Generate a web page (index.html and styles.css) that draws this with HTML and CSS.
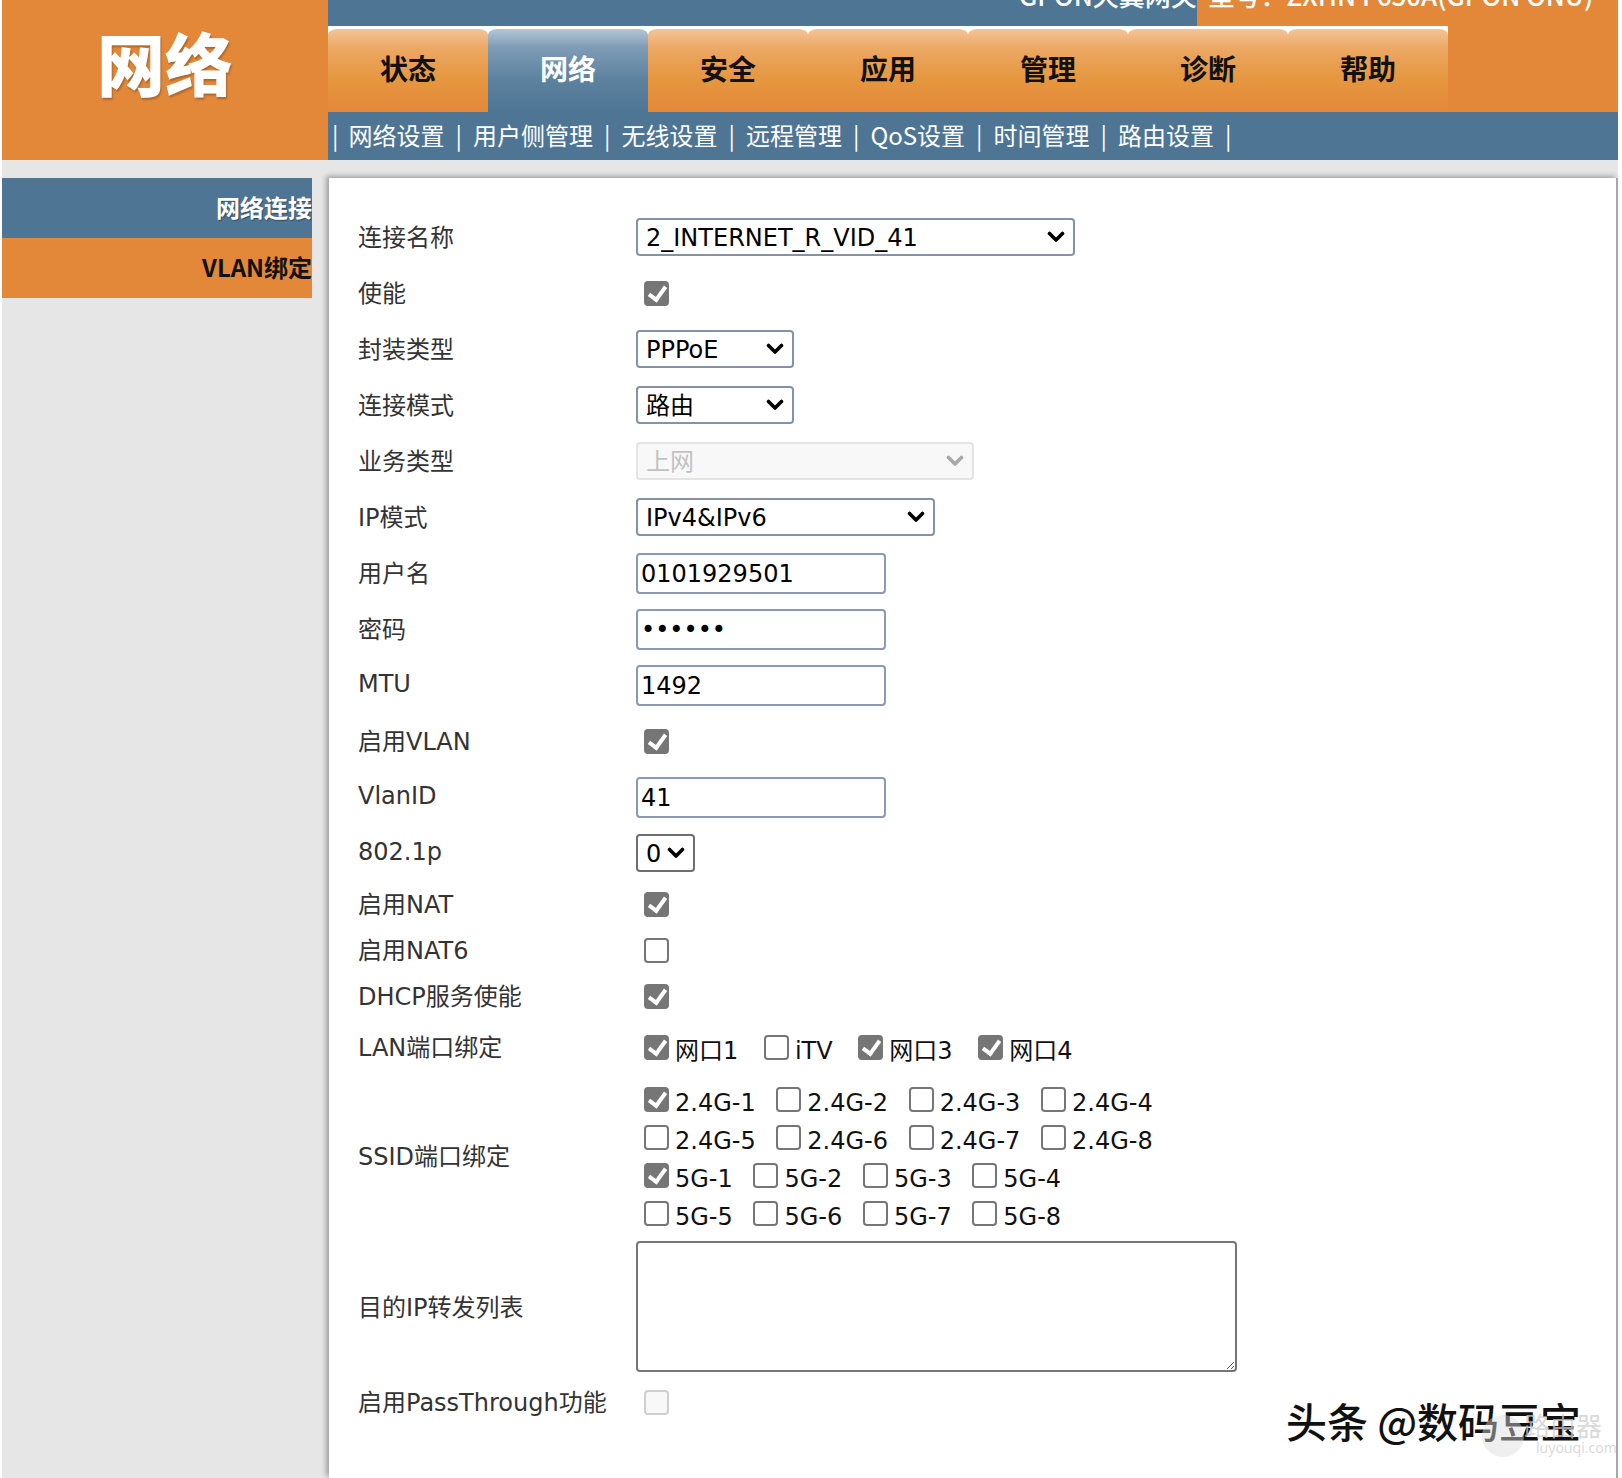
FILE: index.html
```html
<!DOCTYPE html>
<html lang="zh-CN">
<head>
<meta charset="utf-8">
<title>网络</title>
<link rel="stylesheet" href="styles.css">
</head>
<body>
<div class="page">
  <header class="top">
    <div class="logo">网络</div>
    <div class="hright">
      <div class="topbar">
        <div class="tb-blue"></div>
        <div class="tb-orange"></div>
        <div class="model">GPON天翼网关&nbsp;&nbsp;型号：ZXHN F650A(GPON ONU)</div>
      </div>
      <div class="tabrow">
        <nav class="tabs">
          <a class="tab">状态</a>
          <a class="tab active">网络</a>
          <a class="tab">安全</a>
          <a class="tab">应用</a>
          <a class="tab">管理</a>
          <a class="tab">诊断</a>
          <a class="tab">帮助</a>
        </nav>
        <div class="tabfill"></div>
      </div>
      <div class="subnav"><span class="sep first">|</span>网络设置<span class="sep">|</span>用户侧管理<span class="sep">|</span>无线设置<span class="sep">|</span>远程管理<span class="sep">|</span>QoS设置<span class="sep">|</span>时间管理<span class="sep">|</span>路由设置<span class="sep last">|</span></div>
    </div>
  </header>

  <div class="body">
    <aside class="side">
      <div class="side-item side-active">网络连接</div>
      <div class="side-item side-orange">VLAN绑定</div>
    </aside>

    <main class="panel">
      <div class="row">
        <span class="lbl">连接名称</span>
        <span class="sel w-conn"><select><option>2_INTERNET_R_VID_41</option></select><svg class="chev" viewBox="0 0 18 12" width="18" height="12"><path d="M2.5 2.5 L9 9 L15.5 2.5" fill="none" stroke="currentColor" stroke-width="3.6" stroke-linecap="round" stroke-linejoin="round"/></svg></span>
      </div>
      <div class="row">
        <span class="lbl">使能</span>
        <input class="cb" type="checkbox" checked>
      </div>
      <div class="row">
        <span class="lbl">封装类型</span>
        <span class="sel w-s"><select><option>PPPoE</option></select><svg class="chev" viewBox="0 0 18 12" width="18" height="12"><path d="M2.5 2.5 L9 9 L15.5 2.5" fill="none" stroke="currentColor" stroke-width="3.6" stroke-linecap="round" stroke-linejoin="round"/></svg></span>
      </div>
      <div class="row">
        <span class="lbl">连接模式</span>
        <span class="sel w-s"><select><option>路由</option></select><svg class="chev" viewBox="0 0 18 12" width="18" height="12"><path d="M2.5 2.5 L9 9 L15.5 2.5" fill="none" stroke="currentColor" stroke-width="3.6" stroke-linecap="round" stroke-linejoin="round"/></svg></span>
      </div>
      <div class="row">
        <span class="lbl">业务类型</span>
        <span class="sel w-m dis"><select disabled><option>上网</option></select><svg class="chev" viewBox="0 0 18 12" width="18" height="12"><path d="M2.5 2.5 L9 9 L15.5 2.5" fill="none" stroke="currentColor" stroke-width="3.6" stroke-linecap="round" stroke-linejoin="round"/></svg></span>
      </div>
      <div class="row">
        <span class="lbl">IP模式</span>
        <span class="sel w-ip"><select><option>IPv4&amp;IPv6</option></select><svg class="chev" viewBox="0 0 18 12" width="18" height="12"><path d="M2.5 2.5 L9 9 L15.5 2.5" fill="none" stroke="currentColor" stroke-width="3.6" stroke-linecap="round" stroke-linejoin="round"/></svg></span>
      </div>
      <div class="row">
        <span class="lbl">用户名</span>
        <input class="txt" type="text" value="0101929501">
      </div>
      <div class="row">
        <span class="lbl">密码</span>
        <input class="txt" type="password" value="123456">
      </div>
      <div class="row">
        <span class="lbl">MTU</span>
        <input class="txt" type="text" value="1492">
      </div>
      <div class="row">
        <span class="lbl">启用VLAN</span>
        <input class="cb" type="checkbox" checked>
      </div>
      <div class="row">
        <span class="lbl">VlanID</span>
        <input class="txt" type="text" value="41">
      </div>
      <div class="row">
        <span class="lbl">802.1p</span>
        <span class="sel w-p"><select><option>0</option></select><svg class="chev" viewBox="0 0 18 12" width="18" height="12"><path d="M2.5 2.5 L9 9 L15.5 2.5" fill="none" stroke="currentColor" stroke-width="3.6" stroke-linecap="round" stroke-linejoin="round"/></svg></span>
      </div>
      <div class="row cbr">
        <span class="lbl">启用NAT</span>
        <input class="cb" type="checkbox" checked>
      </div>
      <div class="row cbr">
        <span class="lbl">启用NAT6</span>
        <input class="cb" type="checkbox">
      </div>
      <div class="row cbr">
        <span class="lbl">DHCP服务使能</span>
        <input class="cb" type="checkbox" checked>
      </div>
      <div class="row lan">
        <span class="lbl">LAN端口绑定</span>
        <div class="opts">
          <label class="opt"><input class="cb" type="checkbox" checked>网口1</label>
          <label class="opt"><input class="cb" type="checkbox">iTV</label>
          <label class="opt"><input class="cb" type="checkbox" checked>网口3</label>
          <label class="opt"><input class="cb" type="checkbox" checked>网口4</label>
        </div>
      </div>
      <div class="row ssid">
        <span class="lbl">SSID端口绑定</span>
        <div class="opts">
          <div class="line">
            <label class="opt"><input class="cb" type="checkbox" checked>2.4G-1</label>
            <label class="opt"><input class="cb" type="checkbox">2.4G-2</label>
            <label class="opt"><input class="cb" type="checkbox">2.4G-3</label>
            <label class="opt"><input class="cb" type="checkbox">2.4G-4</label>
          </div>
          <div class="line">
            <label class="opt"><input class="cb" type="checkbox">2.4G-5</label>
            <label class="opt"><input class="cb" type="checkbox">2.4G-6</label>
            <label class="opt"><input class="cb" type="checkbox">2.4G-7</label>
            <label class="opt"><input class="cb" type="checkbox">2.4G-8</label>
          </div>
          <div class="line">
            <label class="opt"><input class="cb" type="checkbox" checked>5G-1</label>
            <label class="opt"><input class="cb" type="checkbox">5G-2</label>
            <label class="opt"><input class="cb" type="checkbox">5G-3</label>
            <label class="opt"><input class="cb" type="checkbox">5G-4</label>
          </div>
          <div class="line">
            <label class="opt"><input class="cb" type="checkbox">5G-5</label>
            <label class="opt"><input class="cb" type="checkbox">5G-6</label>
            <label class="opt"><input class="cb" type="checkbox">5G-7</label>
            <label class="opt"><input class="cb" type="checkbox">5G-8</label>
          </div>
        </div>
      </div>
      <div class="row area">
        <span class="lbl">目的IP转发列表</span>
        <textarea class="ta"></textarea>
      </div>
      <div class="row pass">
        <span class="lbl">启用PassThrough功能</span>
        <input class="cb" type="checkbox" disabled>
      </div>
    </main>
  </div>

  <div class="wm">头条 @数码豆宝</div>
  <div class="lyq">
    <span class="lyq-c"></span>
    <span class="lyq-t">路由器</span>
    <span class="lyq-u">luyouqi.com</span>
  </div>
</div>
</body>
</html>
```

FILE: styles.css
```css
html, body {
  margin: 0;
  padding: 0;
  background: #fff;
  overflow: hidden;
}

.page {
  position: relative;
  min-height: 1478px;
  padding: 0 4px 0 2px;
  display: flex;
  flex-direction: column;
  font-family: "DejaVu Sans", "Noto Sans CJK SC", sans-serif;
}

/* ---------- header ---------- */
.top {
  display: flex;
  height: 160px;
}

.logo {
  width: 326px;
  flex: none;
  background: #e38839;
  color: #fff;
  font-family: "Noto Sans CJK SC", sans-serif;
  font-weight: 900;
  font-size: 68px;
  line-height: 68px;
  text-align: center;
  padding-top: 28px;
  box-sizing: border-box;
  text-shadow: 1px 2px 2px rgba(0, 0, 0, 0.25);
}

.hright {
  flex: 1;
  display: flex;
  flex-direction: column;
}

.topbar {
  position: relative;
  height: 26px;
  display: flex;
  overflow: hidden;
}

.tb-blue {
  width: 869px;
  background: #4e7594;
}

.tb-orange {
  flex: 1;
  background: #e38839;
}

.model {
  position: absolute;
  left: 691px;
  top: -18px;
  color: #fff;
  font-family: "Noto Sans CJK SC", sans-serif;
  font-weight: 500;
  font-size: 26px;
  line-height: 26px;
  white-space: nowrap;
}

.tabrow {
  height: 86px;
  display: flex;
}

.tabs {
  width: 1120px;
  display: flex;
  background: #fff;
  padding-top: 3px;
}

.tab {
  width: 160px;
  height: 83px;
  box-sizing: border-box;
  padding-bottom: 6px;
  display: flex;
  align-items: center;
  justify-content: center;
  font-family: "Noto Sans CJK SC", sans-serif;
  font-weight: 700;
  font-size: 28px;
  color: #111;
  border-radius: 9px 9px 0 0 / 6px 6px 0 0;
  background: linear-gradient(to bottom, #f3c598 0%, #eca865 22%, #e6973f 60%, #e38839 100%);
}

.tab.active {
  color: #fff;
  background: linear-gradient(to bottom, #b4c6d6 0%, #7f9cb6 22%, #5d82a0 60%, #4e7594 100%);
}

.tabfill {
  flex: 1;
  background: #e38839;
}

.subnav {
  height: 48px;
  background: #4e7594;
  color: #fff;
  font-family: "Noto Sans CJK SC", sans-serif;
  font-size: 24px;
  line-height: 46px;
  padding-left: 4px;
  white-space: nowrap;
}

.sep {
  margin: 0 11px;
}

.sep.first {
  margin-left: 0;
  margin-right: 10px;
}

.sep.last {
  margin-right: 0;
}

/* ---------- body ---------- */
.body {
  flex: 1;
  display: flex;
  background: #e6e6e6;
  padding-top: 18px;
}

.side {
  width: 310px;
  flex: none;
}

.side-item {
  height: 60px;
  line-height: 58px;
  text-align: right;
  font-family: "Noto Sans CJK SC", sans-serif;
  font-weight: 700;
  font-size: 24px;
  white-space: nowrap;
  overflow: hidden;
}

.side-active {
  background: #4e7594;
  color: #fff;
  text-shadow: 1px 1px 1px rgba(0, 0, 0, 0.35);
}

.side-orange {
  background: #e38839;
  color: #111;
}

.panel {
  flex: 1;
  margin-left: 17px;
  background: #fff;
  border-right: 2px solid #a8a8a8;
  box-shadow: -3px -2px 5px rgba(0, 0, 0, 0.3);
  padding: 31px 0 0 29px;
}

/* ---------- form ---------- */
.row {
  display: flex;
  align-items: center;
  height: 56px;
}

.row.cbr {
  height: 46px;
}

.lbl {
  width: 278px;
  flex: none;
  font-size: 24px;
  color: #333;
  white-space: nowrap;
  padding-bottom: 3px;
}

.sel {
  position: relative;
  display: inline-block;
}

.sel select {
  appearance: none;
  -webkit-appearance: none;
  display: block;
  height: 38px;
  width: 100%;
  box-sizing: border-box;
  border: 2px solid #8192a9;
  border-radius: 4px;
  background: #fff;
  color: #000;
  font-family: "DejaVu Sans", "Noto Sans CJK SC", sans-serif;
  font-size: 24px;
  padding: 2px 36px 0 8px;
  margin: 0;
}

.sel .chev {
  position: absolute;
  right: 10px;
  top: 13px;
  color: #000;
  pointer-events: none;
}

.sel.dis select {
  background: #f6f6f6;
  border-color: #d9d9d9;
  color: #a8a8a8;
}

.sel.dis .chev {
  color: #a8a8a8;
}

.w-conn { width: 439px; }
.w-s { width: 158px; }
.w-m { width: 338px; }
.w-ip { width: 299px; }
.w-p { width: 59px; }

.w-p select {
  border-color: #6f6f6f;
  padding-right: 0;
}

.txt {
  width: 250px;
  height: 41px;
  box-sizing: border-box;
  border: 2px solid #8a9ab0;
  border-radius: 4px;
  padding: 2px 3px 0;
  margin: 0;
  font-family: "DejaVu Sans", "Noto Sans CJK SC", sans-serif;
  font-size: 24px;
  color: #000;
  background: #fff;
}

.cb {
  appearance: none;
  -webkit-appearance: none;
  position: relative;
  width: 25px;
  height: 25px;
  box-sizing: border-box;
  margin: 0 6px 0 8px;
  border: 2px solid #767676;
  border-radius: 4px;
  background: #fff;
  vertical-align: -1px;
}

.cb:checked {
  background: #767676;
}

.cb:checked::after {
  content: "";
  position: absolute;
  left: 6px;
  top: 0px;
  width: 7px;
  height: 14px;
  border: solid #fff;
  border-width: 0 4px 4px 0;
  transform: rotate(36deg);
}

.cb:disabled {
  border-color: #cfcfcf;
  background: #f8f8f8;
}

.opts {
  font-size: 24px;
  line-height: 38px;
  color: #111;
  white-space: nowrap;
}

.opt + .opt {
  margin-left: 5px;
}

.lan .opts {
  padding-top: 8px;
}

.lan .opt + .opt {
  margin-left: 10px;
}

.row.ssid {
  height: auto;
}

.ssid .opts {
  margin-top: 9px;
}

.row.area {
  height: 131px;
  margin-top: 5px;
}

.ta {
  width: 601px;
  height: 131px;
  box-sizing: border-box;
  border: 2px solid #767676;
  border-radius: 4px;
  margin: 0;
  font-family: "DejaVu Sans", sans-serif;
  font-size: 24px;
}

.row.pass {
  height: 48px;
  margin-top: 6px;
}

/* ---------- watermark ---------- */
.wm {
  position: absolute;
  left: 1286px;
  top: 1396px;
  font-family: "Noto Sans CJK SC", sans-serif;
  font-weight: 500;
  font-size: 41px;
  line-height: 48px;
  color: #111;
  text-shadow: 2px 2px 0 #fff, -1px -1px 0 #fff;
  white-space: nowrap;
}

.lyq {
  position: absolute;
  left: 1480px;
  top: 1414px;
  width: 140px;
  height: 48px;
}

.lyq-c {
  position: absolute;
  left: 2px;
  top: 1px;
  width: 42px;
  height: 42px;
  border-radius: 50%;
  background: rgba(220, 220, 220, 0.45);
}

.lyq-t {
  position: absolute;
  left: 44px;
  top: -4px;
  font-family: "Noto Sans CJK SC", sans-serif;
  font-size: 26px;
  line-height: 30px;
  color: rgba(205, 205, 205, 0.75);
  white-space: nowrap;
}

.lyq-u {
  position: absolute;
  left: 56px;
  top: 26px;
  font-family: "Noto Sans", sans-serif;
  font-size: 14px;
  line-height: 16px;
  color: rgba(205, 205, 205, 0.75);
  white-space: nowrap;
}
```
